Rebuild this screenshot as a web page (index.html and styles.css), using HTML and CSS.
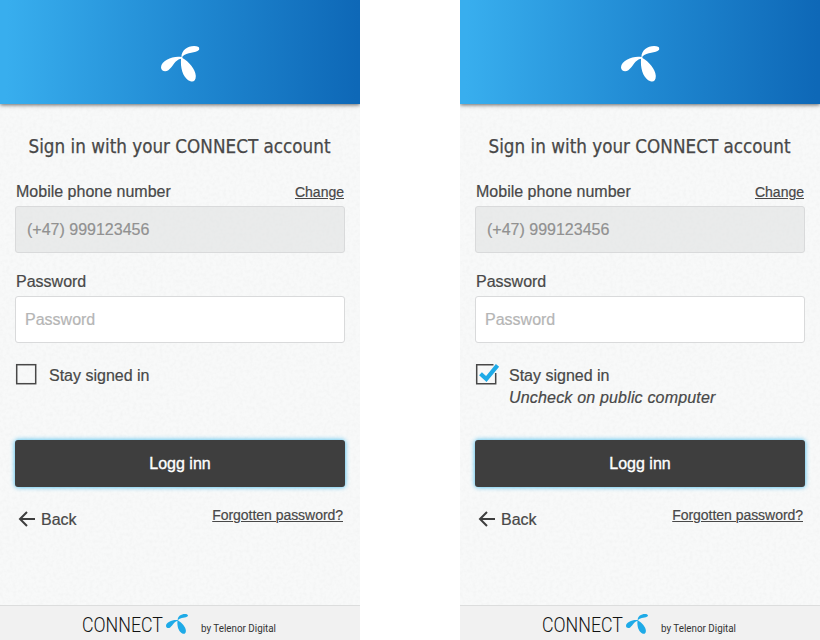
FILE: index.html
```html
<!DOCTYPE html>
<html lang="en">
<head>
<meta charset="utf-8">
<title>Sign in</title>
<link rel="stylesheet" href="styles.css">
</head>
<body>
<svg class="defs" width="0" height="0" aria-hidden="true">
  <symbol id="propeller" viewBox="33 33 115 107" preserveAspectRatio="none">
    <path d="M94 66C94 45 112 33 132 33C145 33 151 39 146 45C138 54 110 51 97 64L97 69C116 79 136 103 137 122C137 136 130 141 121 138C100 130 90 101 93 71C75 73 68 96 55 105C45 112 33 107 33 96C34 75 72 61 94 66Z"/>
  </symbol>
  <filter id="grain" x="0" y="0" width="100%" height="100%">
    <feTurbulence type="fractalNoise" baseFrequency="0.3" numOctaves="2" seed="4"/>
    <feColorMatrix values="0 0 0 0 0.5  0 0 0 0 0.51  0 0 0 0 0.51  0.16 0 0 0 -0.06"/>
  </filter>
</svg>
<main class="stage">
  <section class="phone">
    <svg class="texture" aria-hidden="true"><rect width="100%" height="100%" filter="url(#grain)"/></svg>
    <header class="top"><svg class="logo"><use href="#propeller"/></svg></header>
    <form class="form">
      <h1 class="title"><svg width="304" height="28"><text x="0.5" y="20" textLength="302" lengthAdjust="spacingAndGlyphs">Sign in with your CONNECT account</text></svg></h1>
      <div class="row"><label class="label">Mobile phone number</label><a class="link">Change</a></div>
      <div class="field disabled">(+47) 999123456</div>
      <div class="row second"><label class="label">Password</label></div>
      <div class="field">Password</div>
      <div class="stay">
        <svg class="check" width="24" height="24" viewBox="0 0 24 24"><rect class="box" x="1.7" y="2.7" width="19" height="19"/></svg>
        <div class="stay-text">Stay signed in</div>
      </div>
      <div class="button">Logg inn</div>
      <div class="links">
        <a class="back"><svg class="arrow" width="16" height="16" viewBox="0 0 16 16"><path d="M8 1L1 8L8 15M1 8H16"/></svg><span>Back</span></a>
        <a class="link forgot">Forgotten password?</a>
      </div>
    </form>
    <footer class="footer">
      <svg class="brand" width="82" height="26"><text x="0" y="20" textLength="81" lengthAdjust="spacingAndGlyphs">CONNECT</text></svg>
      <svg class="mark"><use href="#propeller"/></svg>
      <svg class="by" width="76" height="18"><text x="0" y="12" textLength="75" lengthAdjust="spacingAndGlyphs">by Telenor Digital</text></svg>
    </footer>
  </section>
  <section class="phone">
    <svg class="texture" aria-hidden="true"><rect width="100%" height="100%" filter="url(#grain)"/></svg>
    <header class="top"><svg class="logo"><use href="#propeller"/></svg></header>
    <form class="form">
      <h1 class="title"><svg width="304" height="28"><text x="0.5" y="20" textLength="302" lengthAdjust="spacingAndGlyphs">Sign in with your CONNECT account</text></svg></h1>
      <div class="row"><label class="label">Mobile phone number</label><a class="link">Change</a></div>
      <div class="field disabled">(+47) 999123456</div>
      <div class="row second"><label class="label">Password</label></div>
      <div class="field">Password</div>
      <div class="stay">
        <svg class="check" width="24" height="24" viewBox="0 0 24 24"><path class="box" d="M18.5 2.7H1.7V21.7H20.7V11"/><path class="tick" d="M5.5 11.8L11.3 17L22.5 3.3"/></svg>
        <div class="stay-text">Stay signed in<br><em>Uncheck on public computer</em></div>
      </div>
      <div class="button">Logg inn</div>
      <div class="links">
        <a class="back"><svg class="arrow" width="16" height="16" viewBox="0 0 16 16"><path d="M8 1L1 8L8 15M1 8H16"/></svg><span>Back</span></a>
        <a class="link forgot">Forgotten password?</a>
      </div>
    </form>
    <footer class="footer">
      <svg class="brand" width="82" height="26"><text x="0" y="20" textLength="81" lengthAdjust="spacingAndGlyphs">CONNECT</text></svg>
      <svg class="mark"><use href="#propeller"/></svg>
      <svg class="by" width="76" height="18"><text x="0" y="12" textLength="75" lengthAdjust="spacingAndGlyphs">by Telenor Digital</text></svg>
    </footer>
  </section>
</main>
</body>
</html>
```
FILE: styles.css
```css
* { box-sizing: border-box; }
body {
  margin: 0;
  background: #fff;
  color: #484848;
  font: 16px/22px "Liberation Sans", Arial, sans-serif;
  -webkit-text-stroke: .2px;
}
svg { display: block; flex: none; overflow: visible; }
.defs { position: absolute; }
.stage { display: flex; justify-content: space-between; width: 820px; height: 640px; overflow: hidden; }
.phone {
  position: relative;
  display: flex;
  flex-direction: column;
  width: 360px;
  height: 640px;
  background: #f8f9f9;
  overflow: hidden;
}
.texture { position: absolute; inset: 0; width: 360px; height: 640px; }
.logo, .mark, .arrow, .check { -webkit-text-stroke: 0; }
.top {
  position: relative;
  height: 104px;
  padding: 46px 0 0 161px;
  background: linear-gradient(91deg, #38aeee 2%, #2089d2 52%, #0e68b7 99%);
  box-shadow: 0 1px 4px rgba(0, 0, 0, .6);
}
.logo { width: 38.5px; height: 36px; fill: #fff; }
.form { position: relative; flex: 1; padding: 0 15px; }
.title { margin: 29px 0 0 13px; height: 47px; font-size: 20px; font-weight: 400; }
.title text { font-family: "DejaVu Sans Condensed", "DejaVu Sans", sans-serif; font-size: 19px; fill: #484848; stroke: #484848; stroke-width: .25px; }
.row { display: flex; justify-content: space-between; height: 26px; padding: 0 1px; }
.second { margin-top: 17px; }
.label { padding-top: 1px; }
.link { font-size: 14px; line-height: 23px; text-decoration: underline; text-decoration-thickness: 1px; padding-top: 1px; }
.forgot { padding-top: 0; letter-spacing: -.04px; }
.field {
  height: 47px;
  padding: 0 9px;
  border: 1px solid #d9dadb;
  border-radius: 3px;
  background: #fff;
  color: #b5b5b5;
  line-height: 45px;
}
.disabled { padding-left: 11px; background: rgba(220, 221, 221, .5); color: #919191; }
.stay { display: flex; gap: 10px; height: 97px; padding-top: 19px; }
.stay-text { padding-top: 3px; }
.stay-text em { letter-spacing: .18px; }
.box { fill: none; stroke: #484848; stroke-width: 1.5; }
.tick { fill: none; stroke: #1eaae7; stroke-width: 4.2; }
.button {
  height: 47px;
  border-radius: 3px;
  background: #3e3e3e;
  box-shadow: 0 0 5px #35b6ed;
  color: #fff;
  line-height: 48px;
  text-align: center;
  -webkit-text-stroke: .35px #fff;
}
.links { display: flex; justify-content: space-between; padding: 17px 2px 0 4px; }
.back { display: flex; gap: 6px; padding-top: 5px; }
.arrow { margin-top: 2px; fill: none; stroke: #3e3e3e; stroke-width: 2; }
.footer {
  position: relative;
  display: flex;
  align-items: flex-start;
  height: 35px;
  padding: 6px 0 0 82px;
  border-top: 1px solid #dcdddd;
  background: #f1f1f1;
}
.brand text { font: 300 21px Roboto, sans-serif; fill: #111; }
.mark { width: 22px; height: 20px; margin: 2px 0 0 2px; fill: #1eaae7; }
.by { margin: 8px 0 0 13px; }
.by text { font: 400 10px Roboto, sans-serif; fill: #333; -webkit-text-stroke: 0; }
.brand text { -webkit-text-stroke: 0; }
```
